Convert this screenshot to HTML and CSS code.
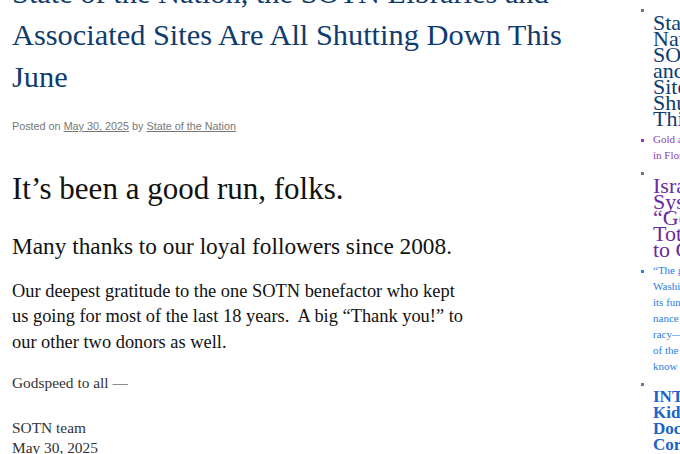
FILE: index.html
```html
<!DOCTYPE html>
<html>
<head>
<meta charset="utf-8">
<link rel="stylesheet" href="styles.css">
</head>
<body>
<div class="page">
  <main class="main">
    <h1 class="title">State of the Nation, the SOTN Libraries and Associated Sites Are All Shutting Down This June</h1>
    <div class="meta">Posted on <a href="#">May 30, 2025</a> by <a href="#">State of the Nation</a></div>
    <h2 class="lead">It’s been a good run, folks.</h2>
    <h3 class="sub">Many thanks to our loyal followers since 2008.</h3>
    <p class="body">Our deepest gratitude to the one SOTN benefactor who kept us going for most of the last 18 years.&nbsp; A big “Thank you!” to our other two donors as well.</p>
    <p class="small">Godspeed to all —</p>
    <p class="small sign">SOTN team<br>May 30, 2025</p>
  </main>
  <aside class="side">
    <ul class="list">
      <li class="item"><span class="mk">&nbsp;</span><div class="h h-navy">State Nation SOTN and Sites Shutting This</div></li>
      <li class="ex ex-purple">Gold&nbsp;and in&nbsp;Florida</li>
      <li class="item"><span class="mk">&nbsp;</span><div class="h h-purple">Israel System “Genocide Totally to&nbsp;Gaza</div></li>
      <li class="ex ex-blue">“The&nbsp;global Washington its&nbsp;funding nance <span class="nw">racy—the</span> of&nbsp;the know</li>
      <li class="item"><span class="mk">&nbsp;</span><div class="h h-blue">INTEL Kidnap Documents Corrupt</div></li>
    </ul>
  </aside>
</div>
</body>
</html>
```
FILE: styles.css
```css
html, body {
  margin: 0;
  padding: 0;
  overflow: hidden;
  background: #fff;
}
.page {
  display: flex;
  width: 680px;
  height: 454px;
  overflow: hidden;
}
.main {
  width: 458px;
  padding-left: 12px;
  flex: none;
  margin-top: -28px;
  font-family: "Liberation Serif", serif;
  color: #111;
}
.title {
  font-family: "Liberation Serif", serif;
  font-weight: normal;
  font-size: 30.4px;
  line-height: 42px;
  color: #0f3c6e;
  margin: 0;
  width: 575px;
}
.meta {
  font-family: "Liberation Sans", sans-serif;
  font-size: 10.8px;
  line-height: 12.4px;
  color: #777;
  margin-top: 22px;
}
.meta a { color: #777; }
.lead {
  font-weight: normal;
  font-size: 31px;
  margin: 39px 0 0;
  line-height: 36px;
}
.sub {
  font-weight: normal;
  font-size: 23.3px;
  margin: 23.5px 0 0;
  line-height: 30px;
}
.body {
  font-size: 18.4px;
  line-height: 25.5px;
  margin: 18px 0 0;
}
.small {
  font-size: 15.4px;
  line-height: 20px;
  color: #333;
  margin: 17.5px 0 0;
}
.sign { margin-top: 25px; }
.side {
  margin-left: 167px;
  width: 43px;
  overflow: hidden;
  flex: none;
}
.list {
  list-style: square;
  margin: 3px 0 0;
  padding: 0 0 0 16px;
  width: 27px;
  color: #777;
  font-family: "Liberation Serif", serif;
}
.list li {
  font-size: 11px;
  line-height: 16px;
}
.list li::marker { font-size: 9px; }
.item + .ex, .ex + .item { margin-top: 3.5px; }
.mk {
  display: block;
  line-height: 12px;
  height: 12px;
}
.list .item { line-height: 12px; }
.h {
  font-size: 22px;
  line-height: 16px;
  padding: 0;
}
.nw { white-space: nowrap; }
.h-navy { color: #0f3c6e; }
.h-purple { color: #6b2aa0; }
.h-blue { color: #1a63c9; font-weight: bold; font-size: 17px; }
.ex-purple { color: #8a3db5; }
.ex-blue { color: #2a7de1; }
```
